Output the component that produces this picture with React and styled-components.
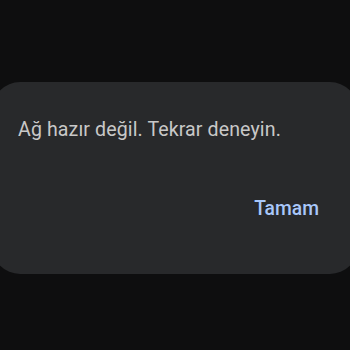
import React from 'react';
import styled, { createGlobalStyle } from 'styled-components';

const GlobalStyles = createGlobalStyle`
  html, body {
    margin: 0;
    padding: 0;
    background: #0e0e0f;
  }
  #root {
    width: 350px;
    height: 350px;
    overflow: hidden;
  }
`;

const Screen = styled.main`
  width: 350px;
  height: 350px;
  display: flex;
  align-items: center;
  justify-content: center;
  font-family: Roboto, 'Noto Sans', sans-serif;
`;

const Dialog = styled.section`
  box-sizing: border-box;
  flex: 0 0 366px;
  height: 192px;
  margin-top: 6px;
  background: #28292b;
  border-radius: 28px;
  padding: 36px 39px 0 26px;
  display: flex;
  flex-direction: column;
`;

const Message = styled.p`
  margin: 0;
  color: #c8c8c8;
  font-size: 19.6px;
  line-height: 24px;
  letter-spacing: 0.1px;
`;

const Actions = styled.div`
  display: flex;
  justify-content: flex-end;
  margin-top: 55px;
`;

const ActionButton = styled.button`
  border: 0;
  background: none;
  padding: 0;
  font-family: inherit;
  font-size: 19.3px;
  font-weight: 500;
  line-height: 24px;
  color: #a8c7fa;
  cursor: pointer;
`;

export default function App() {
  return (
    <>
      <GlobalStyles />
      <Screen>
        <Dialog role="alertdialog">
          <Message>Ağ hazır değil. Tekrar deneyin.</Message>
          <Actions>
            <ActionButton>Tamam</ActionButton>
          </Actions>
        </Dialog>
      </Screen>
    </>
  );
}
